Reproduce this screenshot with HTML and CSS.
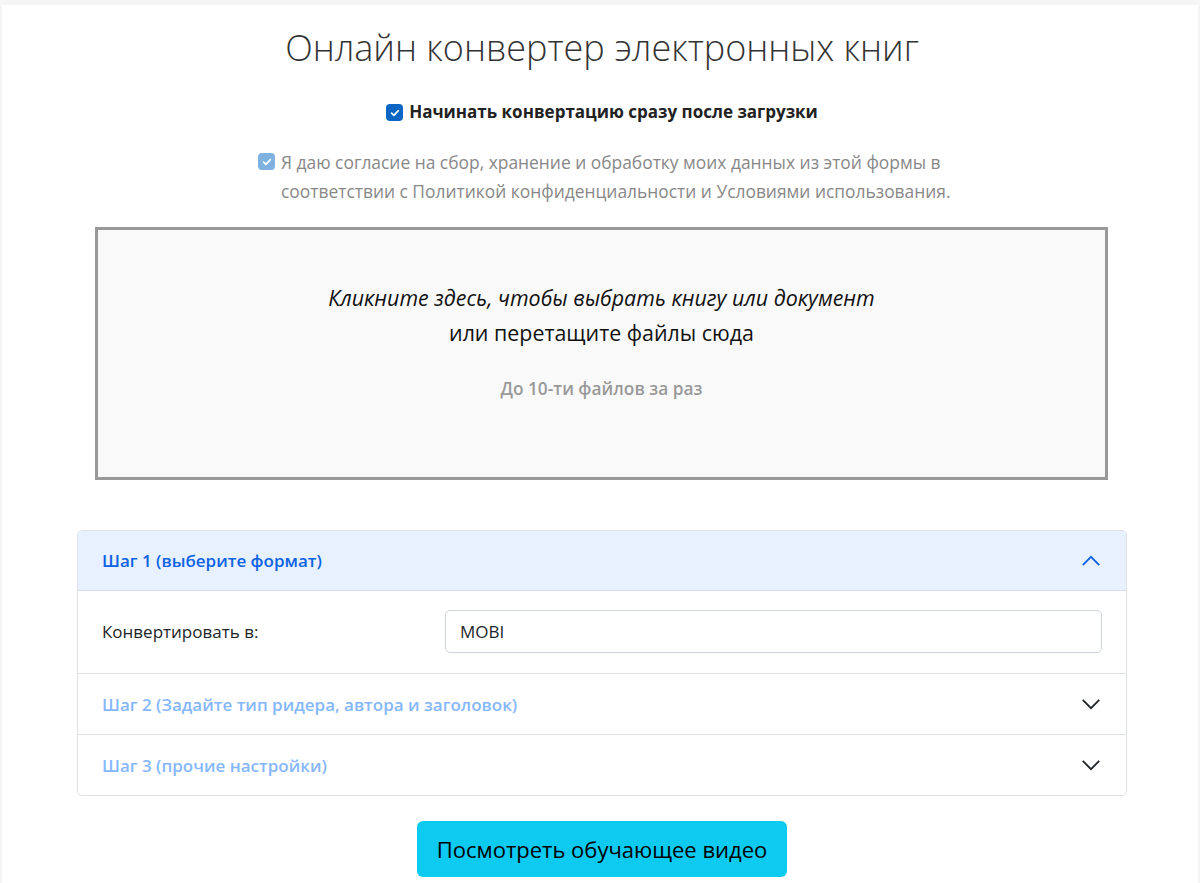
FILE: index.html
```html
<!DOCTYPE html>
<html lang="ru">
<head>
  <meta charset="UTF-8">
  <meta name="viewport" content="width=device-width, initial-scale=1.0">
  <title>Онлайн конвертер электронных книг</title>
  <link rel="stylesheet" href="styles.css">
</head>
<body>
  <main class="page">
    <h1 class="title">Онлайн конвертер электронных книг</h1>

    <label class="check check-main">
      <span class="box">
        <svg viewBox="0 0 16 16" width="12" height="12"><path d="M3.5 8.2l3 3 6-6.4" fill="none" stroke="#fff" stroke-width="2.2" stroke-linecap="round" stroke-linejoin="round"/></svg>
      </span>
      <span>Начинать конвертацию сразу после загрузки</span>
    </label>

    <label class="check check-consent">
      <span class="box">
        <svg viewBox="0 0 16 16" width="12" height="12"><path d="M3.5 8.2l3 3 6-6.4" fill="none" stroke="#fff" stroke-width="2.2" stroke-linecap="round" stroke-linejoin="round"/></svg>
      </span>
      <span class="consent-text">Я даю согласие на сбор, хранение и обработку моих данных из этой формы в соответствии с Политикой конфиденциальности и Условиями использования.</span>
    </label>

    <section class="dropzone">
      <p class="drop-main"><em>Кликните здесь, чтобы выбрать книгу или документ</em><br>или перетащите файлы сюда</p>
      <p class="drop-hint">До 10-ти файлов за раз</p>
    </section>

    <section class="accordion">
      <div class="acc-item">
        <div class="acc-head active">
          <span>Шаг 1 (выберите формат)</span>
          <svg class="chev" viewBox="0 0 16 16" width="22" height="22"><path d="M2 11l6-6 6 6" fill="none" stroke="#0c63e4" stroke-width="1.3"/></svg>
        </div>
        <div class="acc-body">
          <span class="field-label">Конвертировать в:</span>
          <div class="select">MOBI</div>
        </div>
      </div>
      <div class="acc-item">
        <div class="acc-head">
          <span>Шаг 2 (Задайте тип ридера, автора и заголовок)</span>
          <svg class="chev" viewBox="0 0 16 16" width="22" height="22"><path d="M2 5l6 6 6-6" fill="none" stroke="#212529" stroke-width="1.3"/></svg>
        </div>
      </div>
      <div class="acc-item">
        <div class="acc-head">
          <span>Шаг 3 (прочие настройки)</span>
          <svg class="chev" viewBox="0 0 16 16" width="22" height="22"><path d="M2 5l6 6 6-6" fill="none" stroke="#212529" stroke-width="1.3"/></svg>
        </div>
      </div>
    </section>

    <div class="actions">
      <button class="btn-video" type="button">Посмотреть обучающее видео</button>
    </div>
  </main>
</body>
</html>
```

FILE: styles.css
```css
body {
  margin: 0;
  background: #f5f5f5;
  font-family: "Open Sans", "Noto Sans", sans-serif;
  color: #212529;
}
.page {
  background: #fff;
  margin: 5px 2px 0 2px;
  padding: 20px 71px 8px 75px;
  min-height: 900px;
  box-sizing: border-box;
}

/* заголовок */
.title {
  margin: 0 0 29px;
  text-align: center;
  font-weight: 300;
  font-size: 36px;
  line-height: 46px;
  color: #333;
}

/* чекбоксы */
.check {
  display: flex;
  justify-content: center;
  align-items: flex-start;
  gap: 6px;
}
.box {
  flex: none;
  width: 17px;
  height: 17px;
  border-radius: 4px;
  background: #0a66c2;
  display: flex;
  align-items: center;
  justify-content: center;
  margin-top: 3px;
}
.check-main {
  font-weight: 700;
  font-size: 17px;
  line-height: 24px;
  color: #222;
}
.check-main .box {
  margin-top: 4px;
}
.check-consent {
  margin: 24px 0 0 181px;
  width: 704px;
  justify-content: flex-start;
  color: #888;
  font-size: 17.4px;
  line-height: 29px;
}
.check-consent .box {
  background: #7fb2e0;
  margin-top: 5px;
}

/* зона загрузки */
.dropzone {
  margin: 21px 19px 0 18px;
  height: 253px;
  border: 3px solid #999;
  background: #f9f9f9;
  text-align: center;
  padding-top: 50px;
  box-sizing: border-box;
}
.drop-main {
  margin: 0;
  font-size: 21.4px;
  font-weight: 500;
  line-height: 35px;
  color: #111;
}
.drop-hint {
  margin: 27px 0 0;
  font-size: 17.3px;
  font-weight: 600;
  color: #999;
}

/* аккордеон */
.accordion {
  margin-top: 50px;
  border: 1px solid #dee2e6;
  border-radius: 5px;
  overflow: hidden;
}
.acc-item + .acc-item {
  border-top: 1px solid #dee2e6;
}
.acc-head {
  height: 60px;
  display: flex;
  align-items: center;
  justify-content: space-between;
  padding: 0 24px;
  font-size: 17px;
  font-weight: 600;
  color: #86b7fe;
}
.acc-head.active {
  height: 59px;
  background: #e7f1ff;
  color: #0c63e4;
  border-bottom: 1px solid #d5dde8;
}
.acc-body {
  display: flex;
  align-items: center;
  padding: 19px 24px 20px;
}
.field-label {
  width: 343px;
  font-size: 17px;
}
.select {
  flex: 1;
  height: 43px;
  box-sizing: border-box;
  border: 1px solid #ced4da;
  border-radius: 5px;
  padding: 0 14px;
  display: flex;
  align-items: center;
  font-size: 17px;
}

/* кнопка */
.actions {
  display: flex;
  justify-content: center;
  margin-top: 25px;
}
.btn-video {
  background: #0dcaf0;
  border: none;
  border-radius: 6px;
  padding: 0 20px;
  height: 56px;
  font-family: inherit;
  font-size: 22px;
  color: #000;
}
```
